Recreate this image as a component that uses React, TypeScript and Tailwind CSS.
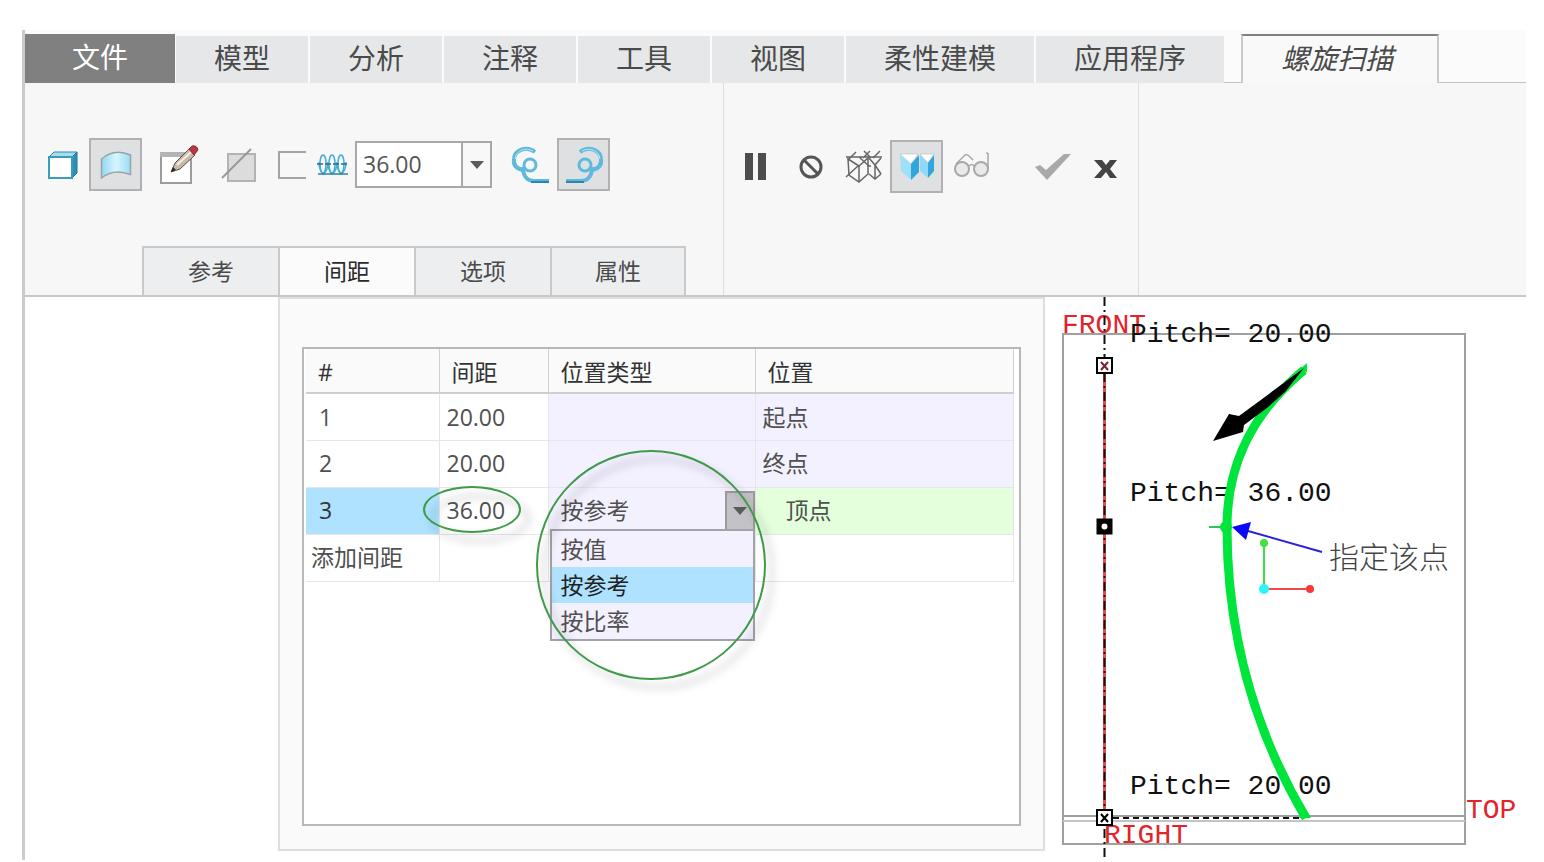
import { useState } from "react";
import type { ReactNode } from "react";
import clsx from "clsx";

const menus = ["模型", "分析", "注释", "工具", "视图", "柔性建模", "应用程序"];
const panelTabs = ["参考", "间距", "选项", "属性"];
const positionTypes = ["按值", "按参考", "按比率"];

const SolidIcon = () => (
  <svg width="32" height="30" viewBox="0 0 32 30">
    <path d="M2 7 7 2h23l-5 5z" fill="#a9dcee" stroke="#2b89ab" />
    <path d="m25 7 5-5v21l-5 5z" fill="#2f8fb3" stroke="#1f7596" />
    <path d="M2 7h23v21H2z" fill="#fff" stroke="#3a9cbd" strokeWidth="2" />
  </svg>
);

const SurfaceIcon = () => (
  <svg width="32" height="30" viewBox="0 0 32 30">
    <defs>
      <linearGradient id="surface" x1="0" x2="1" y1="0" y2="0">
        <stop offset="0" stopColor="#8fd8f4" />
        <stop offset="0.5" stopColor="#d8f5ff" />
        <stop offset="1" stopColor="#9adcf5" />
      </linearGradient>
    </defs>
    <path
      d="M1.5 9Q14-2 30.5 5v19.5Q14 18 1.5 28z"
      fill="url(#surface)"
      stroke="#9aa3a8"
      strokeWidth="1.5"
    />
  </svg>
);

const SketchIcon = () => (
  <svg width="42" height="42" viewBox="0 0 42 42">
    <path d="M3 9h30v30H3z" fill="#fff" stroke="#9c9c9c" strokeWidth="2" />
    <path d="M2 8h26l-4 5H2z" fill="#b4b4b4" />
    <path d="m13 28 4-9L31 5l6 6-15 14z" fill="#c9b9a8" stroke="#5b514a" />
    <path d="m19 21 14-13" stroke="#f6f0ea" strokeWidth="2" />
    <path d="m13 28 2-5 3 3z" fill="#2a2a2a" />
    <path d="m31 5 3-3q5-1 6 4l-4 5z" fill="#b8383f" stroke="#96292f" />
  </svg>
);

const RemoveIcon = () => (
  <svg width="38" height="36" viewBox="0 0 38 36">
    <path d="M8 7h27v27H8z" fill="#dcdcdc" stroke="#b3b3b3" strokeWidth="2" />
    <path d="M2 31 31 2" stroke="#989898" strokeWidth="2" />
  </svg>
);

const ThinIcon = () => (
  <svg width="30" height="30" viewBox="0 0 30 30">
    <path d="M29 2H2v26h27" fill="none" stroke="#a3a3a3" strokeWidth="2" />
  </svg>
);

const HelixIcon = () => (
  <svg width="32" height="22" viewBox="0 0 32 22" fill="none">
    <g stroke="#45aed3" strokeWidth="1.5">
      <ellipse cx="6" cy="10" rx="3" ry="9" />
      <ellipse cx="15" cy="10" rx="3" ry="9" />
      <ellipse cx="24" cy="10" rx="3" ry="9" />
      <path d="M2 8q0 8 4 12 5-3 5-12M11 8q0 8 4 12 5-3 5-12M20 8q0 8 4 12 5-3 5-12" />
    </g>
    <path d="M0 10h31" stroke="#2c6c86" strokeWidth="1.5" strokeDasharray="6 2" />
    <path d="M1 20h30" stroke="#2f7f9f" strokeWidth="1.5" />
  </svg>
);

const SpiralIcon = ({ mirrored }: { mirrored?: boolean }) => (
  <svg
    width="42"
    height="42"
    viewBox="0 0 42 42"
    fill="none"
    className={clsx(mirrored && "-scale-x-100")}
  >
    <g stroke="#5fb9dc" strokeWidth="4">
      <path d="M25 8C17 2 5 5 4 15c-1 7 4 10 9 11" />
      <circle cx="20" cy="21" r="6" strokeWidth="3" />
      <path d="M13 23c0 9 4 14 11 14h15" />
    </g>
    <path d="M23 7C16 3 6 6 5 15" stroke="#b9e8f8" />
    <path d="M21 38h18" stroke="#2a86aa" strokeWidth="2" />
  </svg>
);

const PauseIcon = () => (
  <svg width="22" height="28" viewBox="0 0 22 28" fill="#4d4d4d">
    <path d="M0 0h8v27H0zM13 0h8v27h-8z" />
  </svg>
);

const NoPreviewIcon = () => (
  <svg width="24" height="24" viewBox="0 0 24 24" fill="none" stroke="#555" strokeWidth="3">
    <circle cx="12" cy="12" r="10" />
    <path d="m5 5 14 14" />
  </svg>
);

const WireframeIcon = () => (
  <svg width="38" height="34" viewBox="0 0 38 34" fill="none" stroke="#666" strokeWidth="1.5">
    <path d="m3 9 11 7 9-8v16l-9 8-10-7z" />
    <path d="M14 16v16M1 7h36M1 27l12-11M3 10l8-8M14 7l10 9M18 8l7-7M19 1l7 7" />
    <path d="m24 8 6 7 6-7M30 15v14M24 24l6 5 6-5M30 15l6 9M28 8l7-7M23 16h3" />
  </svg>
);

const ShadedIcon = () => (
  <svg width="38" height="30" viewBox="0 0 38 30">
    <path d="M2 2h18l-7 10z" fill="#fff" stroke="#9fb7c2" strokeWidth="0.5" />
    <path d="m2 3 11 9v16L3 19z" fill="#9fe0f8" />
    <path d="m13 12 8-9v17l-8 8z" fill="#2fa6dc" />
    <path d="M22 2h14l-6 9z" fill="#fff" stroke="#9fb7c2" strokeWidth="0.5" />
    <path d="m22 3 8 8v15l-8-7z" fill="#8fd9f6" />
    <path d="m30 11 6-8v16l-6 7z" fill="#2fa6dc" />
  </svg>
);

const GlassesIcon = () => (
  <svg width="38" height="28" viewBox="0 0 38 28" fill="none" stroke="#a8a8a8" strokeWidth="2">
    <circle cx="9" cy="18" r="7" fill="#e9e9e9" />
    <circle cx="28" cy="18" r="7" fill="#e9e9e9" />
    <path d="M3 13 12 4q2-1 4 1l4 4M16 15q3-3 5 0M33 2q3 0 2 3v13" strokeWidth="1.5" />
  </svg>
);

const CheckIcon = () => (
  <svg width="38" height="28" viewBox="0 0 38 28">
    <path d="m1 14 5-2 6 5L30 1h7L13 27z" fill="#a9a9a9" />
  </svg>
);

const CloseIcon = () => (
  <svg width="24" height="18" viewBox="0 0 24 18" fill="#444">
    <path d="M0 0h8l4 5 4-5h7l-7 9 7 9h-7l-4-6-5 6H0l8-9z" />
  </svg>
);

const Caret = () => (
  <svg width="14" height="8" viewBox="0 0 14 8" fill="#5c5c5c">
    <path d="M0 0h14L7 8z" />
  </svg>
);

interface ToolButtonProps {
  label: string;
  selected?: boolean;
  className?: string;
  children: ReactNode;
}

const ToolButton = ({ label, selected, className, children }: ToolButtonProps) => (
  <button
    type="button"
    aria-label={label}
    aria-pressed={selected}
    className={clsx(
      "flex size-[53px] shrink-0 items-center justify-center",
      selected && "border-2 border-[#b0b1b2] bg-[#dfe0e2]",
      className
    )}
  >
    {children}
  </button>
);

const MenuBar = () => (
  <nav className="flex h-[53px] items-end bg-[#fbfbfb] text-[28px] leading-[44px] text-[#4a4a4a]">
    <button type="button" className="h-[49px] bg-[#808080] px-[47px] pb-1 text-white">
      文件
    </button>
    <div className="flex gap-[2px] pl-px">
      {menus.map((menu) => (
        <button
          key={menu}
          type="button"
          className="h-[47px] bg-[#e5e7e9] px-[38px] pb-1 whitespace-nowrap"
        >
          {menu}
        </button>
      ))}
    </div>
    <div className="h-px w-[17px] bg-[#c4c4c4]" />
    <button
      type="button"
      className="h-[49px] border-x-2 border-t-2 border-x-[#c9c9c9] border-t-[#808080] bg-[#f9f9f9] pr-11 pb-1 pl-[38px] whitespace-nowrap italic"
    >
      螺旋扫描
    </button>
    <div className="h-px flex-1 bg-[#c4c4c4]" />
  </nav>
);

const Toolbar = () => {
  const [activeTab, setActiveTab] = useState("间距");
  const [pitch, setPitch] = useState("36.00");

  return (
    <div className="flex h-[214px] border-b-2 border-[#c8c8c8] bg-[#f7f7f7]">
      <div className="flex w-[699px] shrink-0 flex-col justify-between border-r border-[#dedede] pt-[55px]">
        <div className="flex items-center pl-[11px]">
          <ToolButton label="实体">
            <SolidIcon />
          </ToolButton>
          <ToolButton label="曲面" selected>
            <SurfaceIcon />
          </ToolButton>
          <ToolButton label="草绘" className="ml-[10px]">
            <SketchIcon />
          </ToolButton>
          <ToolButton label="移除材料" className="ml-[7px]">
            <RemoveIcon />
          </ToolButton>
          <button type="button" aria-label="薄板特征" className="ml-3">
            <ThinIcon />
          </button>
          <label htmlFor="pitch" aria-label="螺距" className="ml-[10px]">
            <HelixIcon />
          </label>
          <div className="ml-[6px] flex h-[47px] w-[137px] border-2 border-[#a8a8a8] bg-white">
            <input
              id="pitch"
              value={pitch}
              onChange={(e) => setPitch(e.target.value)}
              className="w-full min-w-0 pl-[6px] text-[23px] text-[#555] outline-none"
            />
            <button
              type="button"
              aria-label="最近使用的值"
              className="flex w-[29px] shrink-0 items-center justify-center border-l-2 border-[#a8a8a8] bg-[#f8f8f8]"
            >
              <Caret />
            </button>
          </div>
          <ToolButton label="左手定则" className="ml-3">
            <SpiralIcon />
          </ToolButton>
          <ToolButton label="右手定则" selected>
            <SpiralIcon mirrored />
          </ToolButton>
        </div>
        <div role="tablist" className="ml-[117px] flex text-[23px] text-[#4a4a4a]">
          {panelTabs.map((tab) => (
            <button
              key={tab}
              type="button"
              role="tab"
              aria-selected={tab === activeTab}
              onClick={() => setActiveTab(tab)}
              className={clsx(
                "h-[49px] w-[136px] border-t-2 border-l-2 border-[#c8c9ca] last:border-r-2",
                tab === activeTab ? "bg-[#fbfbfb] text-[#2a2a2a]" : "bg-[#edeef0]"
              )}
            >
              {tab}
            </button>
          ))}
        </div>
      </div>
      <div className="flex w-[415px] shrink-0 items-start border-r border-[#dedede] pt-[57px] pl-[5px]">
        <ToolButton label="暂停">
          <PauseIcon />
        </ToolButton>
        <ToolButton label="无预览" className="ml-[2px]">
          <NoPreviewIcon />
        </ToolButton>
        <ToolButton label="分离预览">
          <WireframeIcon />
        </ToolButton>
        <ToolButton label="连接预览" selected>
          <ShadedIcon />
        </ToolButton>
        <ToolButton label="校验" className="ml-[2px] pb-1">
          <GlassesIcon />
        </ToolButton>
        <ToolButton label="确定" className="ml-7">
          <CheckIcon />
        </ToolButton>
        <ToolButton label="取消" className="pt-1">
          <CloseIcon />
        </ToolButton>
      </div>
    </div>
  );
};

const PositionTypeSelect = () => {
  const [value, setValue] = useState("按参考");
  const [open, setOpen] = useState(true);

  return (
    <div className="relative flex h-[46px] items-center">
      <select
        aria-label="位置类型"
        value={value}
        onChange={(e) => setValue(e.target.value)}
        className="h-full w-full appearance-none pl-3 outline-none"
      >
        {positionTypes.map((type) => (
          <option key={type}>{type}</option>
        ))}
      </select>
      <button
        type="button"
        aria-label="展开"
        onClick={() => setOpen(!open)}
        className="absolute top-[3px] right-0 flex h-10 w-[30px] items-center justify-center border-2 border-[#9b9b9b] bg-[#c3c2c6]"
      >
        <Caret />
      </button>
      {open && (
        <ul
          role="listbox"
          aria-label="位置类型"
          className="absolute top-[41px] right-0 left-px z-10 border-2 border-[#a3a2a8] bg-[#f4f1ff] leading-9"
        >
          {positionTypes.map((type) => (
            <li
              key={type}
              role="option"
              aria-selected={type === value}
              onClick={() => setValue(type)}
              className={clsx("h-9 pl-[9px]", type === value && "bg-[#aee2ff] text-[#222]")}
            >
              {type}
            </li>
          ))}
        </ul>
      )}
      {/* callout ring */}
      <div className="pointer-events-none absolute top-[-38px] left-[-13px] z-20 size-[230px] rounded-full border-2 border-[#3f9a49] drop-shadow-[7px_8px_4px_rgba(0,0,0,0.3)]" />
    </div>
  );
};

const PitchTable = () => (
  <table className="w-full table-fixed border-collapse text-left text-[23px] text-[#505050]">
    <colgroup>
      <col className="w-[133px]" />
      <col className="w-[109px]" />
      <col className="w-[207px]" />
      <col />
    </colgroup>
    <thead>
      <tr className="h-11 border-b-2 border-[#cfcfcf] bg-[#fafafa] text-[#333] *:border-r *:border-[#cfcfcf] *:px-3 *:pt-1 *:font-normal">
        <th>#</th>
        <th>间距</th>
        <th>位置类型</th>
        <th>位置</th>
      </tr>
    </thead>
    <tbody className="*:h-[47px] *:border-b *:border-[#e6e6e9] [&_td]:border-r [&_td]:border-[#e6e6e9]">
      <tr>
        <td className="pl-[13px]">1</td>
        <td className="pl-[7px]">20.00</td>
        <td className="bg-[#f3f0ff]" />
        <td className="bg-[#f3f0ff] pl-[7px]">起点</td>
      </tr>
      <tr>
        <td className="pl-[13px]">2</td>
        <td className="pl-[7px]">20.00</td>
        <td className="bg-[#f3f0ff]" />
        <td className="bg-[#f3f0ff] pl-[7px]">终点</td>
      </tr>
      <tr>
        <td className="bg-[#aee2ff] pl-[13px] text-[#333]">3</td>
        <td>
          <div className="relative pl-[7px]">
            36.00
            <div className="pointer-events-none absolute top-[-7px] left-[-17px] h-[47px] w-[98px] rounded-[50%] border-2 border-[#3f9a49] drop-shadow-[8px_9px_4px_rgba(0,0,0,0.3)]" />
          </div>
        </td>
        <td className="bg-[#f4f1ff]">
          <PositionTypeSelect />
        </td>
        <td className="bg-[#e4ffdc] pl-[30px]">顶点</td>
      </tr>
      <tr>
        <td className="pl-[5px]">添加间距</td>
        <td />
        <td />
        <td />
      </tr>
    </tbody>
  </table>
);

const ModelView = () => (
  <svg
    viewBox="0 0 481 563"
    className="block w-full"
    fontFamily='"Liberation Mono", monospace'
    fontSize="28"
  >
    {/* datum planes */}
    <g fill="none" stroke="#a0a0a0" strokeWidth="2">
      <path d="M18 37h402v510H18zM18 519h402" />
      <path d="M18 524h402" stroke="#c4c4c4" />
    </g>
    <g fill="#e3232b">
      <text x="17" y="36">FRONT</text>
      <text x="59" y="546">RIGHT</text>
      <text x="421" y="521">TOP</text>
    </g>

    {/* rotation axis */}
    <path d="M59.5 76v438" stroke="#e2494f" strokeWidth="3" />
    <path d="M59.5 0v563" stroke="#111" strokeWidth="2" strokeDasharray="9 4 2 4" />
    <path d="M68 521h186" stroke="#111" strokeWidth="2" strokeDasharray="6 4" />

    <g fill="#111">
      <text x="85" y="45">Pitch= 20.00</text>
      <text x="85" y="204">Pitch= 36.00</text>
      <text x="85" y="497">Pitch= 20.00</text>
    </g>

    {/* sweep trajectory */}
    <path
      d="M259 73C205 118 182 170 182 230C182 345 213 440 261 521"
      fill="none"
      stroke="#00e53c"
      strokeWidth="9"
    />
    <path d="M254 73l8-7v9zM254 521h12l-5-8z" fill="#00e53c" />
    <path d="M164 230h18" stroke="#2fc455" strokeWidth="2" />
    <circle cx="181" cy="230" r="6" fill="#00e53c" />
    <path d="M259 71 194 119 184 117 168 144 198 135 199 128 222 111 240 95z" fill="#000" />

    {/* axis handles */}
    <g stroke="#000" strokeWidth="2" fill="#fff">
      <path d="M52 61h15v15H52zM52 513h15v15H52z" />
      <path d="M54 224h11v11H54z" fill="#000" strokeWidth="5" />
      <circle cx="59.5" cy="229.5" r="4" />
      <path d="m56 65 7 8m0-8-7 8" stroke="#7a2230" />
      <path d="m56 517 7 8m0-8-7 8" />
    </g>

    {/* csys triad */}
    <path d="M219 246v46" stroke="#3fdc45" strokeWidth="2" />
    <path d="M219 292h46" stroke="#f04a4a" strokeWidth="2" />
    <circle cx="219" cy="246" r="4" fill="#3fe23f" />
    <circle cx="265" cy="292" r="4" fill="#fa3838" />
    <circle cx="219" cy="292" r="5" fill="#2df3fb" />

    <path d="m203 234 74 21" stroke="#2a22d8" strokeWidth="2" />
    <path d="m187 230 19-5-5 18z" fill="#0a0af5" />
    <text
      x="284"
      y="271"
      fontSize="30"
      fill="#444"
      fontFamily='"Noto Sans CJK SC", sans-serif'
      fontWeight="300"
    >
      指定该点
    </text>
  </svg>
);

const App = () => {
  return (
    <main className='flex min-h-screen flex-col bg-white pt-[30px] pr-[18px] pb-[2px] pl-[22px] font-["Open_Sans","Noto_Sans_CJK_SC",sans-serif]'>
      <div className="flex flex-1 flex-col border-l-[3px] border-[#cbcbcb]">
        <MenuBar />
        <Toolbar />
        <div className="grid flex-1 grid-cols-[767fr_481fr] items-start pl-[253px]">
          <section className="border-2 border-[#dedede] bg-[#fafafa] px-[22px] pt-12 pb-[23px]">
            <div className="min-h-[479px] border-2 border-[#b8b8b8] bg-white pr-[5px] pl-[2px]">
              <PitchTable />
            </div>
          </section>
          <section>
            <ModelView />
          </section>
        </div>
      </div>
    </main>
  );
};

export default App;
